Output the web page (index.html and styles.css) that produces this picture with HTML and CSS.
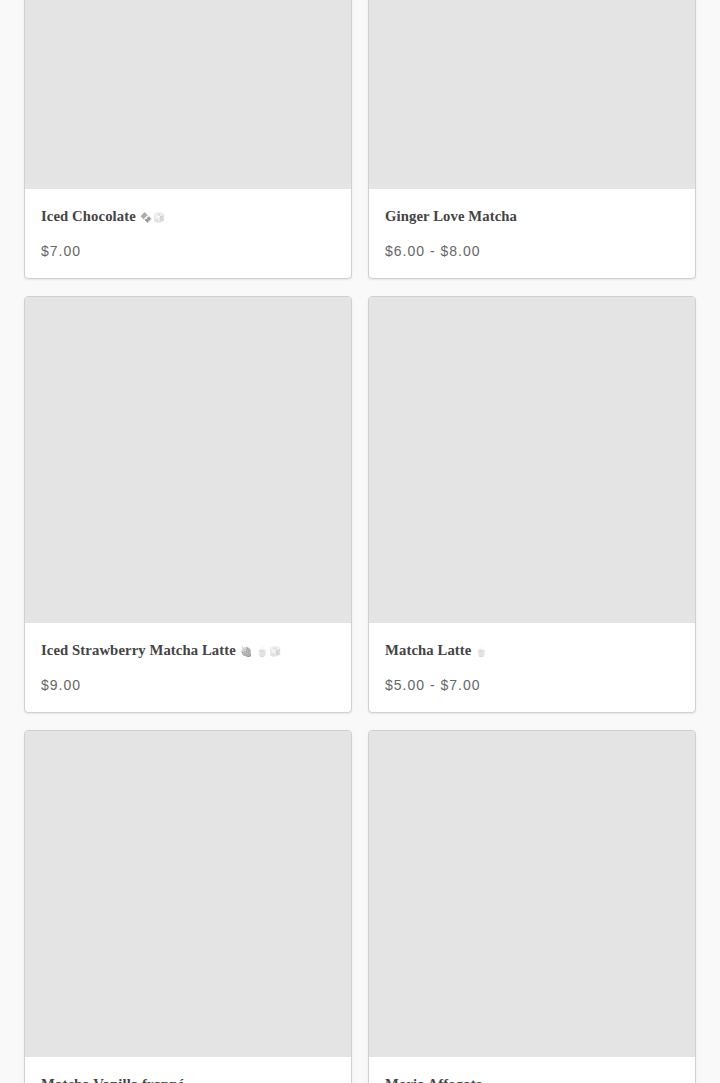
FILE: index.html
```html
<!DOCTYPE html>
<html lang="en">
<head>
    <meta charset="UTF-8">
    <meta name="viewport" content="width=device-width, initial-scale=1.0">
    <title>Menu</title>
    <link rel="stylesheet" href="styles.css">
</head>
<body>
    <div class="page">
        <ul class="product-grid">
            <li class="card">
                <div class="card-media"></div>
                <div class="card-info">
                    <h3 class="card-title">Iced Chocolate <span class="emoji">🍫🧊</span></h3>
                    <p class="card-price">$7.00</p>
                </div>
            </li>
            <li class="card">
                <div class="card-media"></div>
                <div class="card-info">
                    <h3 class="card-title">Ginger Love Matcha</h3>
                    <p class="card-price">$6.00 - $8.00</p>
                </div>
            </li>
            <li class="card">
                <div class="card-media"></div>
                <div class="card-info">
                    <h3 class="card-title">Iced Strawberry Matcha Latte <span class="emoji">🍓</span> <span class="emoji">🍵🧊</span></h3>
                    <p class="card-price">$9.00</p>
                </div>
            </li>
            <li class="card">
                <div class="card-media"></div>
                <div class="card-info">
                    <h3 class="card-title">Matcha Latte <span class="emoji">🍵</span></h3>
                    <p class="card-price">$5.00 - $7.00</p>
                </div>
            </li>
            <li class="card">
                <div class="card-media"></div>
                <div class="card-info">
                    <h3 class="card-title">Matcha Vanilla frappé</h3>
                    <p class="card-price">$8.00</p>
                </div>
            </li>
            <li class="card">
                <div class="card-media"></div>
                <div class="card-info">
                    <h3 class="card-title">Moria Affogato</h3>
                    <p class="card-price">$8.00</p>
                </div>
            </li>
        </ul>
    </div>
</body>
</html>
```

FILE: styles.css
```css
:root {
    --page-bg: #f9f9f9;
    --card-bg: #ffffff;
    --media-bg: #e4e4e4;
    --border: #d0d0d0;
    --title-color: #444444;
    --price-color: #666666;
}

* {
    margin: 0;
    padding: 0;
    box-sizing: border-box;
}

body {
    background-color: var(--page-bg);
    font-family: 'Liberation Sans', Arial, sans-serif;
    overflow: hidden;
}

.page {
    padding: 0 24px;
    margin-top: -138px;
}

.product-grid {
    list-style: none;
    display: grid;
    grid-template-columns: 1fr 1fr;
    column-gap: 16px;
    row-gap: 17px;
}

.card {
    background-color: var(--card-bg);
    border: 1px solid var(--border);
    border-radius: 4px;
    box-shadow: 0 1px 2px rgba(0, 0, 0, 0.08);
    overflow: hidden;
}

.card-media {
    aspect-ratio: 1 / 1;
    background-color: var(--media-bg);
}

.card-info {
    padding: 17px 16px 18px;
    height: 89px;
}

.card-title {
    font-family: 'Liberation Serif', 'Times New Roman', serif;
    font-weight: 700;
    font-size: 14.7px;
    line-height: 20px;
    height: 20px;
    color: var(--title-color);
    letter-spacing: 0.1px;
}

.emoji {
    font-size: 10px;
    line-height: 0;
    letter-spacing: 1px;
    filter: grayscale(1);
    opacity: 0.5;
}

.card-price {
    margin-top: 16px;
    font-size: 14px;
    line-height: 18px;
    color: var(--price-color);
    letter-spacing: 1px;
}
```
